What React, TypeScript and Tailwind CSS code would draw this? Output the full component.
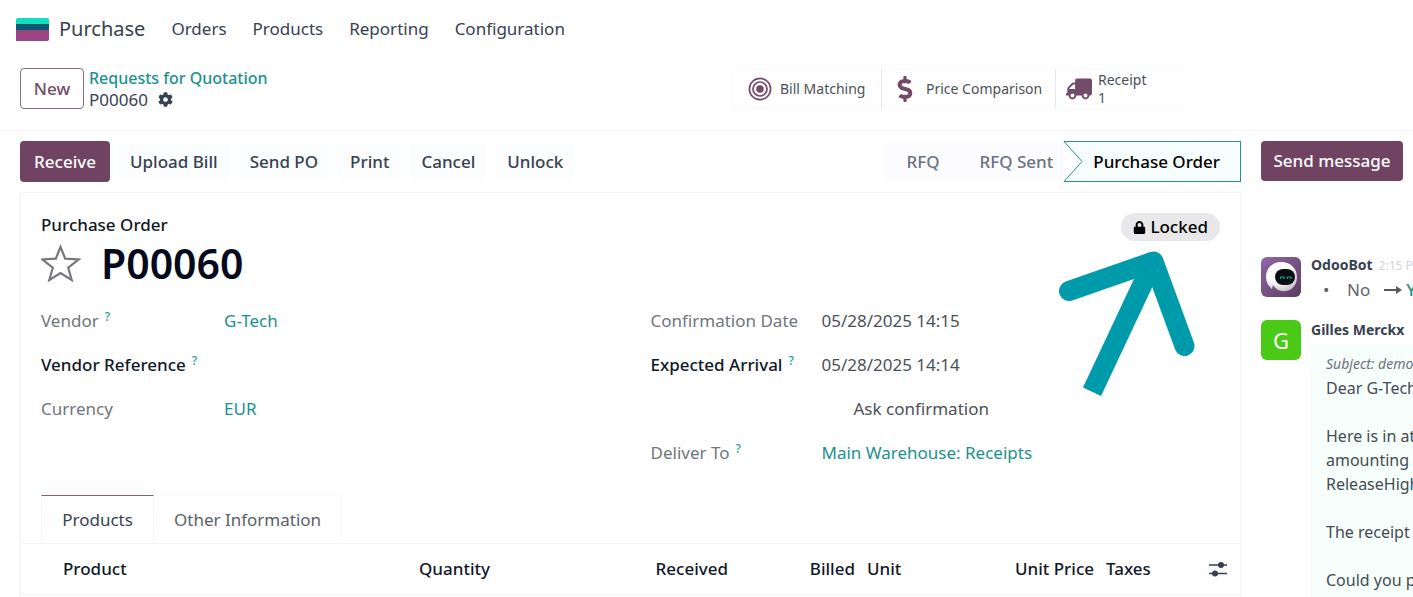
import type { ReactNode } from "react";
import { FaCog, FaDollarSign, FaLock, FaTruck } from "react-icons/fa";

const menus = ["Orders", "Products", "Reporting", "Configuration"];
const actions = ["Upload Bill", "Send PO", "Print", "Cancel", "Unlock"];

function Logo() {
  return (
    <svg viewBox="0 0 33 23" className="h-[23px] w-[33px]">
      <path d="M2 0h29a2 2 0 0 1 2 2v5H0V2a2 2 0 0 1 2-2z" fill="#12e0bd" />
      <path d="M0 6h33v6H0z" fill="#0b5a74" />
      <path d="M0 12h33v9a2 2 0 0 1-2 2H0z" fill="#9b4583" />
    </svg>
  );
}

function TargetIcon() {
  return (
    <svg viewBox="0 0 24 24" className="size-6" fill="none" stroke="#714b67" strokeWidth="1.7">
      <circle cx="12" cy="12" r="10.6" />
      <circle cx="12" cy="12" r="7" />
      <circle cx="12" cy="12" r="3.8" fill="#714b67" stroke="none" />
    </svg>
  );
}

function StarIcon() {
  return (
    <svg viewBox="0 0 40 38" className="h-[38px] w-10" fill="none" stroke="#75777d" strokeWidth="2.2">
      <path d="M19.500 3l4.700 11.600 13.300.900-10.300 8.200 3.500 12.300L19.500 29 8.300 36l3.500-12.300L1.500 15.500l13.300-.900z" />
    </svg>
  );
}

function SlidersIcon() {
  return (
    <svg viewBox="0 0 18 16" className="h-4 w-[18px]" stroke="#374151" strokeWidth="1.4">
      <path d="M0 4h18M0 12.500h18" />
      <circle cx="12" cy="4" r="3" fill="#374151" stroke="none" />
      <circle cx="6" cy="12.500" r="3" fill="#374151" stroke="none" />
    </svg>
  );
}

function BotAvatar() {
  return (
    <svg viewBox="0 0 40 40" className="size-10 shrink-0 rounded-md">
      <defs>
        <linearGradient id="botBg" x1="0" y1="0" x2="1" y2="1">
          <stop offset="0" stopColor="#9068a8" />
          <stop offset="1" stopColor="#5d3b5e" />
        </linearGradient>
        <radialGradient id="botHead" cx="0.4" cy="0.3" r="0.8">
          <stop offset="0.5" stopColor="#ffffff" />
          <stop offset="1" stopColor="#b9b4bd" />
        </radialGradient>
      </defs>
      <rect width="40" height="40" fill="url(#botBg)" />
      <path d="M20 5C11 5 5 12 5 20c0 5 2 9 6 12l1-4c3 5 8 7 13 6 7-1 11-7 11-14 0-9-7-15-16-15z" fill="url(#botHead)" />
      <rect x="14" y="12" width="20" height="16" rx="8" fill="#0b0d12" />
      <path d="M19.500 22v-2h3.500v2M26.500 22v-2H30v2" fill="none" stroke="#1aa58f" strokeWidth="1.200" />
    </svg>
  );
}

function PointerArrow() {
  return (
    <svg
      viewBox="0 0 136 146"
      className="pointer-events-none absolute top-[58px] right-[45px] h-[146px] w-[136px]"
      fill="none"
      stroke="#009bab"
      strokeWidth="20"
    >
      <path d="M10 40L94.500 10.500L125.500 95" strokeLinecap="round" strokeLinejoin="round" />
      <path d="M33 140.700L94 11" />
    </svg>
  );
}

function Label({ children, strong, help }: { children: ReactNode; strong?: boolean; help?: boolean }) {
  return (
    <span className={strong ? "font-medium text-gray-900" : "text-[#71757c]"}>
      {children}
      {help && <sup className="ml-1.5 text-xs font-medium text-[#2a9d9a]">?</sup>}
    </span>
  );
}

function Field({ label, children }: { label?: ReactNode; children?: ReactNode }) {
  return (
    <div className="flex h-11 items-center">
      <div className="w-[171px] shrink-0">{label}</div>
      <div className="text-[#4b5058]">{children}</div>
    </div>
  );
}

export default function App() {
  return (
    <div className="flex h-screen flex-col overflow-hidden bg-white font-['Noto_Sans',sans-serif] text-[17px] whitespace-nowrap text-[#374151]">
      <nav className="flex h-[58px] shrink-0 items-center pl-4">
        <Logo />
        <a href="#purchase" className="ml-2.5 text-xl">Purchase</a>
        <div className="ml-[26px] flex gap-[26px]">
          {menus.map((m) => (
            <button key={m}>{m}</button>
          ))}
        </div>
      </nav>

      <header className="flex h-[73px] shrink-0 items-start border-b border-gray-100 pt-2.5 pl-5">
        <button className="h-[41px] w-16 rounded border border-[#8a6a82] font-medium text-[#714b67]">New</button>
        <div className="ml-[5px] leading-[21px]">
          <a href="#rfq" className="block text-base leading-[21px] font-medium text-[#1a918d]">Requests for Quotation</a>
          <div className="flex items-center gap-2.5">
            <span>P00060</span>
            <button aria-label="Actions"><FaCog size={15} /></button>
          </div>
        </div>
        <div className="mr-[229px] ml-auto flex h-[41px] divide-x divide-gray-200 border-y border-l border-gray-50 text-sm text-[#4b5058]">
          <button className="flex w-[149px] items-center gap-2 pl-[15px]">
            <TargetIcon />
            Bill Matching
          </button>
          <button className="flex w-[174px] items-center gap-2 pl-2.5">
            <FaDollarSign size={26} color="#714b67" />
            Price Comparison
          </button>
          <button className="flex w-32 items-center gap-1.5 pl-2.5 text-left leading-[18px]">
            <FaTruck size={26} color="#714b67" className="-scale-x-100" />
            <span>Receipt<br />1</span>
          </button>
        </div>
      </header>

      <div className="flex min-h-0 flex-1">
        <main className="flex min-w-0 flex-1 flex-col pl-5">
          <div className="flex h-[61px] shrink-0 items-center gap-2 font-medium">
            <button className="h-[41px] w-[90px] rounded bg-[#714362] text-white">Receive</button>
            {actions.map((a) => (
              <button key={a} className="h-[38px] rounded bg-[#fcfdfe] px-3">{a}</button>
            ))}
            <div className="ml-auto flex items-center text-[#6b7280]">
              <button className="h-[38px] bg-[#fcfcfe] px-5">RFQ</button>
              <button className="h-[38px] bg-[#fcfcfe] pr-2.5 pl-5">RFQ Sent</button>
              <button className="flex h-[41px] text-black" aria-current="step">
                <svg viewBox="0 0 20 41" className="h-[41px] w-5" fill="#f6fefd" stroke="#2b9089">
                  <path d="M20 .5H1l18 20-18 20h19" />
                </svg>
                <span className="flex h-full items-center border-y border-r border-[#2b9089] bg-[#f6fefd] pr-5 pl-2.5">
                  Purchase Order
                </span>
              </button>
            </div>
          </div>

          <section className="relative flex-1 border border-b-0 border-gray-100 pt-5">
            <div className="flex items-start justify-between px-5">
              <div>
                <div className="leading-6 font-medium text-gray-900">Purchase Order</div>
                <div className="flex h-[52px] items-center gap-5">
                  <button aria-label="Favorite"><StarIcon /></button>
                  <h1 className="text-[41px] leading-[52px] font-semibold text-[#050a1c]">P00060</h1>
                </div>
              </div>
              <span className="flex h-7 items-center gap-1 rounded-full bg-[#e8e8eb] px-3 font-medium text-black">
                <FaLock size={13} />
                Locked
              </span>
            </div>
            <PointerArrow />

            <div className="grid grid-cols-2 gap-x-10 px-5 pt-2.5">
              <div>
                <Field label={<Label help>Vendor</Label>}>
                  <a href="#vendor" className="ml-3 text-[#1a918d]">G-Tech</a>
                </Field>
                <Field label={<Label strong help>Vendor Reference</Label>} />
                <Field label={<Label>Currency</Label>}>
                  <a href="#currency" className="ml-3 text-[#1a918d]">EUR</a>
                </Field>
              </div>
              <div>
                <Field label={<Label>Confirmation Date</Label>}>05/28/2025 14:15</Field>
                <Field label={<Label strong help>Expected Arrival</Label>}>05/28/2025 14:14</Field>
                <Field><span className="ml-8">Ask confirmation</span></Field>
                <Field label={<Label help>Deliver To</Label>}>
                  <a href="#warehouse" className="text-[#1a918d]">Main Warehouse: Receipts</a>
                </Field>
              </div>
            </div>

            <div className="mt-5 flex h-12 pl-5" role="tablist">
              <button role="tab" aria-selected="true" className="w-[113px] border-x border-t border-x-gray-100 border-t-[#955a70]">
                Products
              </button>
              <button role="tab" aria-selected="false" className="border-t border-r border-gray-50 px-5 text-[#5b6068]">
                Other Information
              </button>
            </div>

            <table className="w-full table-fixed border-y border-gray-100 font-medium text-gray-900">
              <colgroup>
                <col />
                <col className="w-[120px]" />
                <col className="w-[238px]" />
                <col className="w-[127px]" />
                <col className="w-[80px]" />
                <col className="w-[159px]" />
                <col className="w-[103px]" />
                <col className="w-[37px]" />
              </colgroup>
              <thead>
                <tr className="h-[51px] text-right *:px-1.5 *:font-medium">
                  <th className="text-left"><span className="pl-9">Product</span></th>
                  <th>Quantity</th>
                  <th>Received</th>
                  <th>Billed</th>
                  <th className="text-left">Unit</th>
                  <th>Unit Price</th>
                  <th className="text-left">Taxes</th>
                  <th><button className="block" aria-label="Optional columns"><SlidersIcon /></button></th>
                </tr>
              </thead>
            </table>
          </section>
        </main>

        <aside className="w-[172px] shrink-0 overflow-hidden pt-2.5 pl-5">
          <button className="h-10 w-[142px] rounded bg-[#714362] font-medium text-white">Send message</button>
          <div className="mt-[76px] flex gap-2.5">
            <BotAvatar />
            <div>
              <div className="flex items-baseline gap-1.5 text-sm leading-4">
                <span className="font-bold">OdooBot</span>
                <span className="text-xs text-gray-300">2:15 PM</span>
              </div>
              <div className="flex items-center leading-8 text-[#5f646c]">
                <span className="w-9 pl-3">•</span>
                <span>No</span>
                <svg viewBox="0 0 18 10" className="ml-3.5 h-2.5 w-[18px]" fill="#555a62">
                  <path d="M0 4h12V1l6 4-6 4V6H0z" />
                </svg>
                <a href="#yes" className="ml-1 font-medium text-[#1a918d]">Yes</a>
              </div>
            </div>
          </div>
          <div className="mt-[14px] flex gap-2.5">
            <div className="flex size-10 shrink-0 items-center justify-center rounded-md bg-[#4ac916] text-[22px] text-white">G</div>
            <div>
              <div className="text-sm leading-5 font-bold">Gilles Merckx</div>
              <div className="mt-1 bg-[#f7fffd] pt-2 pr-4 pb-8 pl-[15px] text-base leading-6 text-[#444b52]">
                <p className="text-sm leading-6 text-[#6b7278] italic">Subject: demo</p>
                <p>Dear G-Tech,</p>
                <p className="mt-6">Here is in attachment</p>
                <p>amounting in</p>
                <p>ReleaseHighlights</p>
                <p className="mt-6">The receipt</p>
                <p className="mt-6">Could you please</p>
              </div>
            </div>
          </div>
        </aside>
      </div>
    </div>
  );
}
